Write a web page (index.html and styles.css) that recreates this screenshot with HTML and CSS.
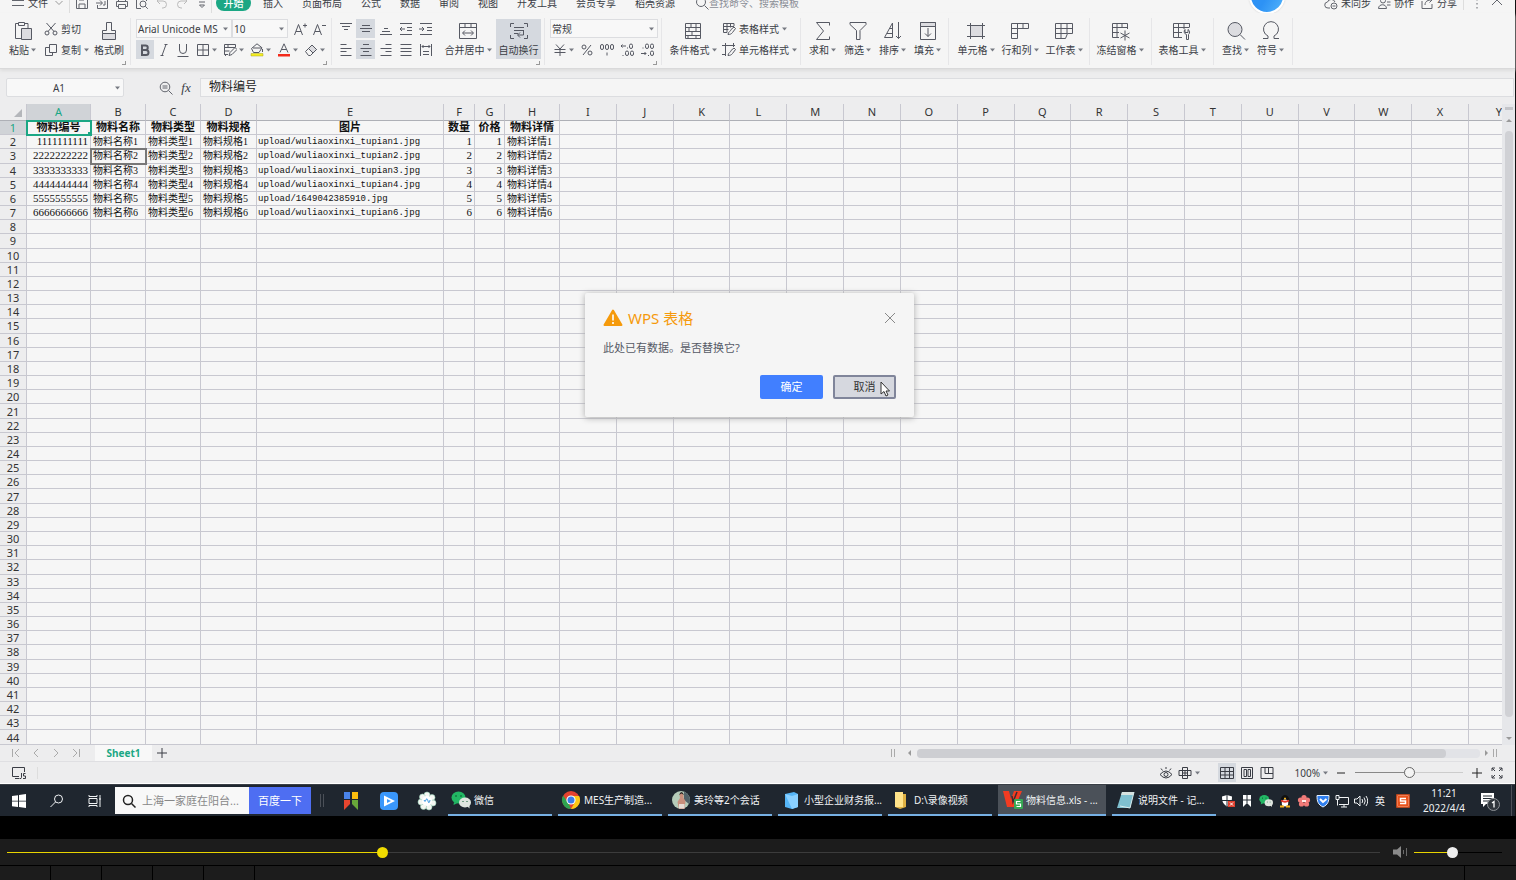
FILE: index.html
```html
<!DOCTYPE html>
<html lang="zh-CN">
<head>
<meta charset="utf-8">
<title>物料信息.xls</title>
<link rel="stylesheet" href="styles.css">
</head>
<body>
<svg class="sprite" aria-hidden="true">
  <symbol id="caret" viewBox="0 0 5 4"><path d="M0 .5h5L2.500 3.500z" fill="currentColor" stroke="none"/></symbol>
  <symbol id="down" viewBox="0 0 8 6"><path d="M.5 1 4 4.500 7.500 1"/></symbol>
  <symbol id="menu" viewBox="0 0 14 14"><path d="M1 4.500h12M1 9.500h12"/></symbol>
  <symbol id="save" viewBox="0 0 14 14"><path d="M1.500 1.500h9l2 2v9h-11zM4 12V8h6v4M4 2v2h5V2"/></symbol>
  <symbol id="export" viewBox="0 0 14 14"><path d="M5 1.500h7.500v11h-10V9M1 7h6M5 4.500 7.500 7 5 9.500M10 5v4h-2"/></symbol>
  <symbol id="print" viewBox="0 0 14 14"><path d="M3.500 5V1.500h7V5M3 10.500H1.500v-5h11v5H11M3.500 8.500h7v4h-7z"/></symbol>
  <symbol id="preview" viewBox="0 0 14 14"><path d="M6 12.500H1.500v-11h10V5"/><circle cx="8" cy="8" r="3"/><path d="m10.300 10.300 2.500 2.500"/></symbol>
  <symbol id="undo" viewBox="0 0 14 14"><path d="M5 2 2 5l3 3M2 5h6a3.500 3.500 0 0 1 0 7H7"/></symbol>
  <symbol id="redo" viewBox="0 0 14 14"><path d="m9 2 3 3-3 3M12 5H6a3.500 3.500 0 0 0 0 7h1"/></symbol>
  <symbol id="more" viewBox="0 0 14 14"><path d="M4 6h6M4.500 9 7 11.500 9.500 9z"/></symbol>
  <symbol id="search" viewBox="0 0 14 14"><circle cx="6" cy="6" r="4.500"/><path d="m9.500 9.500 4 4"/></symbol>
  <symbol id="cloud" viewBox="0 0 14 14"><path d="M6 12H4a3 3 0 0 1-.5-6 4 4 0 0 1 7.500 0"/><circle cx="10" cy="10" r="3"/><path d="M8.500 10h3"/></symbol>
  <symbol id="people" viewBox="0 0 14 14"><circle cx="6" cy="4.500" r="2.500"/><path d="M1.500 12.500c0-5 8-5 8 0zM10 6h3.500M10 9h3.500"/></symbol>
  <symbol id="share" viewBox="0 0 14 14"><path d="M2 5v7.500h10V8M5 9c0-4 3-5 7-5M9.500 1.500 12 4 9.500 6.500"/></symbol>
  <symbol id="dots" viewBox="0 0 14 14"><path d="M7 3v1.500M7 7v1.500M7 11v1.500"/></symbol>
  <symbol id="up" viewBox="0 0 14 14"><path d="m2 9 5-5 5 5"/></symbol>

  <symbol id="paste" viewBox="0 0 20 20"><path d="M9 17.500H2.500v-15h3M12 2.500h3V7M5.500 1.500h6v3h-6z"/><path d="M8.500 7.500h10v11h-10z" fill="#dcdce0"/></symbol>
  <symbol id="cut" viewBox="0 0 14 14"><circle cx="3" cy="11" r="2"/><circle cx="11" cy="11" r="2"/><path d="M2.500 1 10 9.500M11.500 1 4 9.500"/></symbol>
  <symbol id="copy" viewBox="0 0 14 14"><path d="M5.500 1.500h7v8h-7zM5.500 4.500h-4v8h7v-3"/></symbol>
  <symbol id="brush" viewBox="0 0 20 20"><path d="M3.500 12.500h13v6h-13z" fill="#dcdce0"/><path d="M3.500 12.500v-3h4v-8h5v8h4v3"/></symbol>
  <symbol id="grow" viewBox="0 0 14 14"><path d="M1.500 13 5.500 2.500 9.500 13M3 9.500h5M10 3.500h4M12 1.500v4"/></symbol>
  <symbol id="shrink" viewBox="0 0 14 14"><path d="M1.500 13 5.500 2.500 9.500 13M3 9.500h5M10 3.500h4"/></symbol>
  <symbol id="bold" viewBox="0 0 14 14"><path d="M4 2.500h3.500a2.200 2.200 0 0 1 0 4.500H4zM4 7h4a2.400 2.400 0 0 1 0 5H4z" stroke-width="2"/></symbol>
  <symbol id="italic" viewBox="0 0 14 14"><path d="m9 1.500-4 11M7.500 1.500h3M3.500 12.500h3"/></symbol>
  <symbol id="under" viewBox="0 0 14 14"><path d="M3.500 1v6a3.500 3.500 0 0 0 7 0V1M1.500 13.500h11"/></symbol>
  <symbol id="borders" viewBox="0 0 14 14"><path d="M1.500 1.500h11v11h-11zM7 1.500v11M1.500 7h11"/></symbol>
  <symbol id="cellpen" viewBox="0 0 14 14"><path d="M12.500 4V1.500h-11v10H5M1.500 4.500h11M1.500 8h5M5 1.500v3M6 12.500l1-3 5-5 2 2-5 5zM3 13 1.500 11.500"/></symbol>
  <symbol id="fill" viewBox="0 0 14 14"><path d="m7 .8 5 4-3 4.700H3.500L1.500 5.500zM3 5h8M12.500 6v3"/><path d="M1 10.500h12v2.500H1z" fill="#f5ee20" stroke="#a8a520" stroke-width=".5"/></symbol>
  <symbol id="color" viewBox="0 0 14 14"><path d="M3 9.500 7 .8l4 8.700M4.300 6.500h5.400"/><path d="M1 11h12v2.500H1z" fill="#f32a1b" stroke="none"/></symbol>
  <symbol id="erase" viewBox="0 0 14 14"><path d="M1.500 8.500 8 2l4.500 4.500-6 6h-2z"/><path d="M4.500 5.500 8 2l4.500 4.500L9 10z" fill="#dcdce0"/></symbol>

  <symbol id="vtop" viewBox="0 0 14 14"><path d="M1 1.500h12M3 4.500h8M5 7.500h4"/></symbol>
  <symbol id="vmid" viewBox="0 0 14 14"><path d="M3 3.500h8M1 6.500h12M3 9.500h8"/></symbol>
  <symbol id="vbot" viewBox="0 0 14 14"><path d="M5 6.500h4M3 9.500h8M1 12.500h12"/></symbol>
  <symbol id="outdent" viewBox="0 0 14 14"><path d="M1 1.500h12M8 5.500h5M8 8.500h5M1 12.500h12M6 7H1M3 5 1 7l2 2"/></symbol>
  <symbol id="indent" viewBox="0 0 14 14"><path d="M1 1.500h12M8 5.500h5M8 8.500h5M1 12.500h12M0 7h5M3 5l2 2-2 2"/></symbol>
  <symbol id="left" viewBox="0 0 14 14"><path d="M1.500 1.500h6M1.500 5.500h11M1.500 8.500h6M1.500 12.500h11"/></symbol>
  <symbol id="center" viewBox="0 0 14 14"><path d="M4 1.500h6M1.500 5.500h11M4 8.500h6M1.500 12.500h11"/></symbol>
  <symbol id="right" viewBox="0 0 14 14"><path d="M6.500 1.500h6M1.500 5.500h11M6.500 8.500h6M1.500 12.500h11"/></symbol>
  <symbol id="justify" viewBox="0 0 14 14"><path d="M1.500 1.500h11M1.500 5.500h11M1.500 8.500h11M1.500 12.500h11"/></symbol>
  <symbol id="spread" viewBox="0 0 14 14"><path d="M1.500 1v12M12.500 1v12M3 3.500h8M4.500 2 3 3.500 4.500 5M9.500 2 11 3.500 9.500 5M4 8.500h6M4 11.500h6"/></symbol>
  <symbol id="merge" viewBox="0 0 20 20"><path d="M1.500 2.500h17v15h-17zM1.500 6.500h17M7 2.500v4M13 2.500v4M5 12h10M7 9.500 4.500 12 7 14.500M13 9.500l2.500 2.500-2.500 2.500"/></symbol>
  <symbol id="wrap" viewBox="0 0 20 20"><path d="M5 2.500H1.500V6M15 2.500h3.500V6M5 17.500H1.500V14M15 17.500h3.500V14M5 6.500h10M5 9.500h10M5 12.500h4M14.500 9.500v4.500H9M11 11.500 8.500 14l2.500 2.500"/></symbol>
  <symbol id="yen" viewBox="0 0 14 14"><path d="M3 1.500 7 6l4-4.500M7 6v7M1.500 6.500h11M1.500 9.500h11"/></symbol>
  <symbol id="pct" viewBox="0 0 14 14"><circle cx="4" cy="4" r="2"/><circle cx="10" cy="10" r="2"/><path d="M11 2 3 12"/></symbol>
  <symbol id="thou" viewBox="0 0 14 14"><rect x=".5" y="1.500" width="3" height="5" rx="1.500"/><rect x="5.500" y="1.500" width="3" height="5" rx="1.500"/><rect x="10.500" y="1.500" width="3" height="5" rx="1.500"/><path d="M7 9.500v3"/></symbol>
  <symbol id="dinc" viewBox="0 0 14 14"><rect x="9.500" y="1" width="3" height="4.500" rx="1.500"/><rect x="5.500" y="8" width="3" height="4.500" rx="1.500"/><rect x="10.500" y="8" width="3" height="4.500" rx="1.500"/><path d="M6 3H1M2.500 1.500 1 3l1.500 1.500M7 5h1M2.500 12.500h1"/></symbol>
  <symbol id="ddec" viewBox="0 0 14 14"><rect x="5.500" y="1" width="3" height="4.500" rx="1.500"/><rect x="10.500" y="1" width="3" height="4.500" rx="1.500"/><rect x="10.500" y="8" width="3" height="4.500" rx="1.500"/><path d="M1 10.500h5M4.500 9 6 10.500 4.500 12M2.500 5h1M8 12.500h1"/></symbol>

  <symbol id="cond" viewBox="0 0 20 20"><path d="M2.500 2.500h15v15h-15zM2.500 6.500h15M2.500 10.500h15M2.500 14.500h15M8 2.500v4M13 2.500v8M6 6.500v4M9 10.500v4M13 14.500v3M5 14.500v3"/></symbol>
  <symbol id="tstyle" viewBox="0 0 14 14"><path d="M12 4V1.500H1.500v9H5M1.500 4.500H12M1.500 7.500h5M5 1.500v9M8.500 1.500v4M6 12.500c0-3 3-3 3-5l3-2.500 1.500 1.500-3 4c-1 1.500-2.500 2-4.500 2z"/></symbol>
  <symbol id="cstyle" viewBox="0 0 14 14"><path d="M3.500 0v13M0 2.500h13M11.500 0v4M0 11.500h4M6 12.500c0-3 3-3 3-5l3-2.500 1.500 1.500-3 4c-1 1.500-2.500 2-4.500 2z"/></symbol>
  <symbol id="sum" viewBox="0 0 20 20"><path d="M16.500 4.500v-3h-13l7 8.500-7 8.500h13v-3"/></symbol>
  <symbol id="filter" viewBox="0 0 20 20"><path d="M2 1.500h16v2l-6 6v9H8.500v-9L2 3.500z"/></symbol>
  <symbol id="sort" viewBox="0 0 20 20"><path d="M1.500 16.500 9.500 2v14.500zM4 12.500h5.500M7 7.500h2.500M15.500 1v16.500M13 15l2.500 2.500L18 15"/></symbol>
  <symbol id="fillin" viewBox="0 0 20 20"><path d="M2.500 1.500h15v17h-15z"/><path d="M2.500 1.500h15v4h-15z" fill="#dcdce0"/><path d="M10 7v8.500M7 12.500l3 3 3-3"/></symbol>
  <symbol id="cell" viewBox="0 0 20 20"><path d="M4.500 4.500h12v11h-12z" fill="#dcdce0"/><path d="M4.500 2v16M16.500 2v16M1 4.500h18M1 15.500h18"/></symbol>
  <symbol id="rowcol" viewBox="0 0 20 20"><path d="M1.500 2.500h17v5h-11v10h-6zM1.500 7.500h6M7.500 2.500v5M13 2.500v5M1.500 12.500h6"/></symbol>
  <symbol id="sheet" viewBox="0 0 20 20"><path d="M1.500 2.500h17v10h-5l-2 5h-10zM1.500 7.500h17M1.500 12.500h12M7 2.500v15M13 2.500v10"/></symbol>
  <symbol id="freeze" viewBox="0 0 20 20"><path d="M17.500 8V2.500h-15v14H9M2.500 6.500h15M2.500 11.500H9M7 2.500v14M12 2.500v4M15 9.500v10M10.500 12l9 5M19.500 12l-9 5"/></symbol>
  <symbol id="tools" viewBox="0 0 20 20"><path d="M17.500 6V2.500h-16v14H10M1.500 6.500h16M1.500 11.500H10M6.500 2.500v14M12 2.500V8M14.500 18.500v-5a3 3 0 0 1-1.500-5v3h3v-3a3 3 0 0 1 .5 5v5z"/></symbol>
  <symbol id="find" viewBox="0 0 20 20"><circle cx="9" cy="8.500" r="7" fill="#dcdce0"/><path d="m14 13.500 5 5"/></symbol>
  <symbol id="omega" viewBox="0 0 20 20"><path d="M2 17.500h5V15a7.500 7.500 0 1 1 6 0v2.500h5"/></symbol>

  <symbol id="zoomfx" viewBox="0 0 14 14"><circle cx="6" cy="6" r="4.800"/><path d="m9.500 9.500 4 4M3.500 5h5M3.500 7h5"/></symbol>
  <symbol id="first" viewBox="0 0 10 10"><path d="M1.500 1v8M8 1 4 5l4 4"/></symbol>
  <symbol id="prev" viewBox="0 0 10 10"><path d="M7 1 3 5l4 4"/></symbol>
  <symbol id="next" viewBox="0 0 10 10"><path d="m3 1 4 4-4 4"/></symbol>
  <symbol id="last" viewBox="0 0 10 10"><path d="M8.500 1v8M2 1l4 4-4 4"/></symbol>
  <symbol id="plus" viewBox="0 0 10 10"><path d="M5 0v10M0 5h10"/></symbol>
  <symbol id="minus" viewBox="0 0 10 10"><path d="M1 5h8"/></symbol>
  <symbol id="macro" viewBox="0 0 14 14"><path d="M7 10.500H.5v-9h12V6M3 12.500h4M9.500 7v4.500q0 1.500-2 1M13.500 7.500h-2v2.500h2v2.500h-2.500"/></symbol>
  <symbol id="eye" viewBox="0 0 14 14"><path d="M1 8.500q6-7 12 0-6 7-12 0zM2 2.500l1.500 2M7 1v2M12 2.500l-1.500 2"/><circle cx="7" cy="8.500" r="2"/></symbol>
  <symbol id="cross" viewBox="0 0 14 14"><path d="M4.500 1.500h5v11h-5zM1 4.500h12v5H1zM4.500 7h5M7 4.500v5"/></symbol>
  <symbol id="vgrid" viewBox="0 0 14 14"><path d="M.5 1.500h13v11H.5zM.5 5.500h13M.5 9h13M5 1.500v11M9.500 1.500v11"/></symbol>
  <symbol id="vpage" viewBox="0 0 14 14"><path d="M1.500 1.500h11v11h-11zM4 3.500h2.500v7H4zM8 3.500h2.500v7H8z"/></symbol>
  <symbol id="vread" viewBox="0 0 14 14"><path d="M1 1.500h12v11H1zM5 1.500v6h8M8.500 1.500v6"/></symbol>
  <symbol id="expand" viewBox="0 0 14 14"><path d="M2 5V2h3M2 2l3 3M9 2h3v3M12 2 9 5M2 9v3h3M2 12l3-3M12 9v3H9M12 12 9 9"/></symbol>

  <symbol id="win" viewBox="0 0 14 14"><path d="M0 2l6-.8v5.500H0zM7 1l7-1v6.700H7zM0 7.500h6V13l-6-.8zM7 7.500h7V14l-7-1z" fill="#fff" stroke="none"/></symbol>
  <symbol id="lens" viewBox="0 0 14 14"><circle cx="8.500" cy="5" r="4"/><path d="m5.500 8-5 5"/></symbol>
  <symbol id="task" viewBox="0 0 14 14"><path d="M1 1v1.500h8V1M1 13v-1.500h8V13M1 4.500h8v5H1zM12 1v12M11 5h2"/></symbol>
  <symbol id="flag" viewBox="0 0 20 20"><path d="M3 1h6v7H3z" fill="#4a83e8" stroke="none"/><path d="M11 1h6v7h-6z" fill="#fbbd0e" stroke="none"/><path d="M3 9h6v4l-6 6z" fill="#e8452f" stroke="none"/><path d="M11 9h6v10l-6-6z" fill="#68a83a" stroke="none"/></symbol>
  <symbol id="play" viewBox="0 0 20 20"><rect x="1" y="1" width="18" height="18" rx="4" fill="#3a97fb" stroke="none"/><path d="M5 4.500 16 10 5 15.500z" fill="#fff" stroke="none"/><path d="m8 8 4 2-4 2z" fill="#3a97fb" stroke="none"/></symbol>
  <symbol id="flower" viewBox="0 0 20 20"><g fill="#f4f7f2" stroke="#9bd0b8" stroke-width=".6"><circle cx="10" cy="4" r="3"/><circle cx="15" cy="6.500" r="3"/><circle cx="16" cy="12" r="3"/><circle cx="12" cy="16" r="3"/><circle cx="6.500" cy="15.500" r="3"/><circle cx="4" cy="11" r="3"/><circle cx="5.500" cy="6" r="3"/></g><circle cx="10" cy="10" r="5" fill="#fff" stroke="none"/><path d="M7 9q1 3 2 0t2 1 2-1" stroke="#3e9ae0"/></symbol>
  <symbol id="wechat" viewBox="0 0 20 20"><ellipse cx="7.500" cy="7.500" rx="7" ry="6" fill="#22b764" stroke="none"/><path d="m3 12-.5 3 4-2z" fill="#22b764" stroke="none"/><ellipse cx="14" cy="12.500" rx="6" ry="5" fill="#dfe5df" stroke="none"/><path d="m16 16 2.500 2.500V15z" fill="#dfe5df" stroke="none"/><path d="M5 5v2M10 5v2M12 11v1M16 11v1" stroke="#0b5c31"/></symbol>
  <symbol id="chrome" viewBox="0 0 20 20"><circle cx="10" cy="10" r="9" fill="#e5432f" stroke="none"/><path d="M2.200 5.500 8 14l2 5A9 9 0 0 1 2.200 5.500z" fill="#2ea350" stroke="none"/><path d="M10 6h8.100A9 9 0 0 1 10 19l4-7z" fill="#fbc916" stroke="none"/><circle cx="10" cy="10" r="4.600" fill="#fff" stroke="none"/><circle cx="10" cy="10" r="3.500" fill="#3c7ee8" stroke="none"/></symbol>
  <symbol id="avatar" viewBox="0 0 20 20"><circle cx="10" cy="10" r="9" fill="#b5cbb8" stroke="none"/><path d="M13 1.500a9 9 0 0 1 5 12.500l-5-4z" fill="#52636a" stroke="none"/><path d="M8.500 5q2-4 4 0v3l2 3-1 8H8l-1.500-7L9 8z" fill="#c98f7c" stroke="none"/><path d="M8 5q2.500-6 5 0l-2.500-1.500z" fill="#2c2422" stroke="none"/><path d="M8 14h5.500v4.500H8z" fill="#e7ddd6" stroke="none"/></symbol>
  <symbol id="cube" viewBox="0 0 20 20"><path d="M4 4l9-2 4 2v13l-6 2-7-2z" fill="#55b5f7" stroke="none"/><path d="M4 4l7 2 6-2v13l-6 2z" fill="#8ad0ff" stroke="none"/></symbol>
  <symbol id="folder" viewBox="0 0 20 20"><path d="M4 2h8v15H4z" fill="#ffe38a" stroke="none"/><path d="M12 4h3v13l-6 2-5-2h8z" fill="#dfb143" stroke="none"/></symbol>
  <symbol id="wps" viewBox="0 0 20 20"><path d="M0 1h6l2 8 3-8h8l-7 16H4z" fill="#f33b21" stroke="none"/><path d="m9 6 1 6 4-10" stroke="#3b2c30" stroke-width="1.500"/><rect x="11" y="9" width="9" height="10" rx="1" fill="#35a853" stroke="none"/><path d="M17.500 11.500h-4V14h4v2.500h-4" stroke="#fff" stroke-width="1.200"/></symbol>
  <symbol id="note" viewBox="0 0 20 20"><path d="M7 2h12l-4 16H2z" fill="#7fc0d0" stroke="none"/><path d="M7 2h12l-1 3H6z" fill="#d6e2e0" stroke="none"/><path d="m5 16 10 2 4-16" stroke="#d9ecef"/></symbol>
  <symbol id="shield" viewBox="0 0 14 14"><path d="M6 1 11 2.500c0 5-1 7.500-5 10-4-2.500-5-5-5-10z" fill="#fff" stroke="none"/><path d="M6 1v11M1 6.500h10" stroke="#222b33"/><rect x="7" y="7" width="7" height="6" fill="#e0402f" stroke="none"/><path d="m9 8.500 3 3M12 8.500l-3 3" stroke="#fff"/></symbol>
  <symbol id="ribbonw" viewBox="0 0 14 14"><path d="M3 1h8v12l-4-4-4 4z" fill="#fff" stroke="none"/><path d="M7 1v8M3 6h8" stroke="#222b33"/></symbol>
  <symbol id="qq" viewBox="0 0 14 14"><ellipse cx="7" cy="7" rx="4.500" ry="6" fill="#101010" stroke="none"/><ellipse cx="7" cy="9" rx="3.300" ry="3.500" fill="#fff" stroke="none"/><path d="M3 6.500q4 2.500 8 0" stroke="#e8392b" stroke-width="2"/><path d="M6 4.500h2" stroke="#f7b31a" stroke-width="1.500"/><path d="M2 12.500h4M8 12.500h4" stroke="#f7b31a" stroke-width="2"/></symbol>
  <symbol id="rose" viewBox="0 0 14 14"><g fill="#f07a78" stroke="none"><circle cx="7" cy="3.500" r="2.600"/><circle cx="10.500" cy="6" r="2.600"/><circle cx="9.500" cy="10" r="2.600"/><circle cx="4.500" cy="10" r="2.600"/><circle cx="3.500" cy="6" r="2.600"/></g><path d="M5 7h4" stroke="#ffe9e6" stroke-width="2"/></symbol>
  <symbol id="guard" viewBox="0 0 14 14"><path d="M1 1.500h12c0 6-1 9-6 11.500C2 10.500 1 7.500 1 1.500z" fill="#2f7ff0" stroke="#e8f0fa"/><path d="m4 5 3 3 3.500-3" stroke="#fff" stroke-width="2"/></symbol>
  <symbol id="net" viewBox="0 0 14 14"><path d="M4 3.500h9.500v7H4M6 13h6M9 10.500V13M1 1.500h3v4H1zM2.500 5.500v6"/></symbol>
  <symbol id="sound" viewBox="0 0 14 14"><path d="M.5 5H3l3-3v10L3 9H.5zM8 5q1.500 2 0 4M10 3.500q2.500 3.500 0 7M12 2q3.500 5 0 10"/></symbol>
  <symbol id="sogou" viewBox="0 0 14 14"><rect x="1" y="1" width="12" height="12" fill="#fff" stroke="#e9521b" stroke-width="1.500"/><rect x="2" y="2" width="10" height="10" fill="#e9521b" stroke="none"/><path d="M10 4.500H4.500v2.500h5v2.500H4" stroke="#fff" stroke-width="1.500"/></symbol>
  <symbol id="notice" viewBox="0 0 20 20"><path d="M1 2h13v11H6l-3 3v-3H1z" fill="#fff" stroke="none"/><path d="M3 5h9M3 7.500h9M3 10h9" stroke="#222b33"/><circle cx="13.500" cy="13.500" r="6" fill="#30363c" stroke="#8d9196"/><path d="m12 12 2-1.500v6" stroke="#fff" stroke-width="1.300"/></symbol>
  <symbol id="speaker" viewBox="0 0 16 14"><path d="M1 4.500h4L9 1v12L5 9.500H1z" fill="#8a8a8a" stroke="none"/><path d="M11.500 5v4M14.500 3v8" stroke="#6a6a6a"/></symbol>
  <symbol id="warn" viewBox="0 0 20 18"><path d="M10 1.500 18.500 16h-17z" fill="#f59a0c" stroke="#f59a0c" stroke-width="2" stroke-linejoin="round"/><path d="M10 5.500v6M10 13v2" stroke="#fff" stroke-width="1.600"/></symbol>
  <symbol id="close" viewBox="0 0 12 12"><path d="m1 1 10 10M11 1 1 11"/></symbol>
  <symbol id="pointer" viewBox="0 0 10 16"><path d="M1 1v12l3-2.500 2 4.500 2-1-2-4h3.500z" fill="#fff" stroke="#333"/></symbol>
</svg>

<main class="frame">
  <header class="menubar">
    <button class="file"><svg class="s14"><use href="#menu"/></svg>文件<svg class="s8"><use href="#down"/></svg></button>
    <div class="quick">
      <button aria-label="保存"><svg class="s14"><use href="#save"/></svg></button>
      <button aria-label="输出"><svg class="s14"><use href="#export"/></svg></button>
      <button aria-label="打印"><svg class="s14"><use href="#print"/></svg></button>
      <button aria-label="预览"><svg class="s14"><use href="#preview"/></svg></button>
      <button class="dim" aria-label="撤销"><svg class="s14"><use href="#undo"/></svg></button>
      <button class="dim" aria-label="恢复"><svg class="s14"><use href="#redo"/></svg></button>
      <button aria-label="更多"><svg class="s14"><use href="#more"/></svg></button>
    </div>
    <nav class="tabs">
      <button class="current">开始</button><button>插入</button><button>页面布局</button><button>公式</button><button>数据</button><button>审阅</button><button>视图</button><button>开发工具</button><button>会员专享</button><button>稻壳资源</button>
    </nav>
    <label class="command"><svg class="s14"><use href="#search"/></svg><input type="text" placeholder="查找命令、搜索模板" aria-label="查找命令"></label>
    <div class="account">
      <button><svg class="s14"><use href="#cloud"/></svg>未同步</button>
      <button><svg class="s14"><use href="#people"/></svg>协作</button>
      <button><svg class="s14"><use href="#share"/></svg>分享</button>
      <button class="dots" aria-label="选项"><svg class="s14"><use href="#dots"/></svg></button>
      <button aria-label="收起"><svg class="s14"><use href="#up"/></svg></button>
    </div>
    <span class="orb"></span>
  </header>

  <section class="ribbon">
    <div class="group g-clip">
      <button class="big w33"><svg class="s20"><use href="#paste"/></svg><span>粘贴<svg class="caret"><use href="#caret"/></svg></span></button>
      <div class="stack clip">
        <button class="text"><svg class="s14"><use href="#cut"/></svg>剪切</button>
        <button class="text"><svg class="s14"><use href="#copy"/></svg>复制<svg class="caret"><use href="#caret"/></svg></button>
      </div>
      <button class="big w36"><svg class="s20"><use href="#brush"/></svg><span>格式刷</span></button>
      <i class="corner"></i>
    </div>
    <div class="group g-font">
      <div class="stack">
        <div class="line">
          <span class="pick face"><select aria-label="字体"><option>Arial Unicode MS</option></select><svg class="caret"><use href="#caret"/></svg></span>
          <span class="pick size"><select aria-label="字号"><option>10</option></select><svg class="caret"><use href="#caret"/></svg></span>
          <button class="tool step" aria-label="增大字号"><svg class="s14"><use href="#grow"/></svg></button>
          <button class="tool" aria-label="减小字号"><svg class="s14"><use href="#shrink"/></svg></button>
        </div>
        <div class="line">
          <button class="tool on" aria-label="加粗"><svg class="s14"><use href="#bold"/></svg></button>
          <button class="tool" aria-label="倾斜"><svg class="s14"><use href="#italic"/></svg></button>
          <button class="tool" aria-label="下划线"><svg class="s14"><use href="#under"/></svg></button>
          <button class="tool drop" aria-label="边框"><svg class="s14"><use href="#borders"/></svg><svg class="caret"><use href="#caret"/></svg></button>
          <button class="tool drop" aria-label="绘图边框"><svg class="s14"><use href="#cellpen"/></svg><svg class="caret"><use href="#caret"/></svg></button>
          <button class="tool drop" aria-label="填充颜色"><svg class="s14"><use href="#fill"/></svg><svg class="caret"><use href="#caret"/></svg></button>
          <button class="tool drop" aria-label="字体颜色"><svg class="s14"><use href="#color"/></svg><svg class="caret"><use href="#caret"/></svg></button>
          <button class="tool drop" aria-label="清除"><svg class="s14"><use href="#erase"/></svg><svg class="caret"><use href="#caret"/></svg></button>
        </div>
      </div>
      <i class="corner"></i>
    </div>
    <div class="group g-align">
      <div class="stack aligns">
        <div class="line tight">
          <button class="tool" aria-label="顶端对齐"><svg class="s14"><use href="#vtop"/></svg></button>
          <button class="tool on" aria-label="垂直居中"><svg class="s14"><use href="#vmid"/></svg></button>
          <button class="tool" aria-label="底端对齐"><svg class="s14"><use href="#vbot"/></svg></button>
          <button class="tool" aria-label="减少缩进"><svg class="s14"><use href="#outdent"/></svg></button>
          <button class="tool" aria-label="增加缩进"><svg class="s14"><use href="#indent"/></svg></button>
        </div>
        <div class="line tight">
          <button class="tool" aria-label="左对齐"><svg class="s14"><use href="#left"/></svg></button>
          <button class="tool on" aria-label="居中"><svg class="s14"><use href="#center"/></svg></button>
          <button class="tool" aria-label="右对齐"><svg class="s14"><use href="#right"/></svg></button>
          <button class="tool" aria-label="两端对齐"><svg class="s14"><use href="#justify"/></svg></button>
          <button class="tool" aria-label="分散对齐"><svg class="s14"><use href="#spread"/></svg></button>
        </div>
      </div>
      <button class="big w50"><svg class="s20"><use href="#merge"/></svg><span>合并居中<svg class="caret"><use href="#caret"/></svg></span></button>
      <button class="big w45 on"><svg class="s20"><use href="#wrap"/></svg><span>自动换行</span></button>
      <i class="corner"></i>
    </div>
    <div class="group g-num">
      <div class="stack">
        <span class="pick format"><select aria-label="数字格式"><option>常规</option></select><svg class="caret"><use href="#caret"/></svg></span>
        <div class="line tight numbers">
          <button class="tool drop" aria-label="货币"><svg class="s14"><use href="#yen"/></svg><svg class="caret"><use href="#caret"/></svg></button>
          <button class="tool" aria-label="百分比"><svg class="s14"><use href="#pct"/></svg></button>
          <button class="tool" aria-label="千位分隔"><svg class="s14"><use href="#thou"/></svg></button>
          <button class="tool" aria-label="增加小数"><svg class="s14"><use href="#dinc"/></svg></button>
          <button class="tool" aria-label="减少小数"><svg class="s14"><use href="#ddec"/></svg></button>
        </div>
      </div>
      <i class="corner"></i>
    </div>
    <div class="group g-style">
      <button class="big w50"><svg class="s20"><use href="#cond"/></svg><span>条件格式<svg class="caret"><use href="#caret"/></svg></span></button>
      <div class="stack">
        <button class="text"><svg class="s14"><use href="#tstyle"/></svg>表格样式<svg class="caret"><use href="#caret"/></svg></button>
        <button class="text"><svg class="s14"><use href="#cstyle"/></svg>单元格样式<svg class="caret"><use href="#caret"/></svg></button>
      </div>
    </div>
    <div class="group g-edit">
      <button class="big w35"><svg class="s20"><use href="#sum"/></svg><span>求和<svg class="caret"><use href="#caret"/></svg></span></button>
      <button class="big w35"><svg class="s20"><use href="#filter"/></svg><span>筛选<svg class="caret"><use href="#caret"/></svg></span></button>
      <button class="big w35"><svg class="s20"><use href="#sort"/></svg><span>排序<svg class="caret"><use href="#caret"/></svg></span></button>
      <button class="big w35"><svg class="s20"><use href="#fillin"/></svg><span>填充<svg class="caret"><use href="#caret"/></svg></span></button>
    </div>
    <div class="group g-cell">
      <button class="big w44"><svg class="s20"><use href="#cell"/></svg><span>单元格<svg class="caret"><use href="#caret"/></svg></span></button>
      <button class="big w44"><svg class="s20"><use href="#rowcol"/></svg><span>行和列<svg class="caret"><use href="#caret"/></svg></span></button>
      <button class="big w44"><svg class="s20"><use href="#sheet"/></svg><span>工作表<svg class="caret"><use href="#caret"/></svg></span></button>
    </div>
    <div class="group g-one"><button class="big w50"><svg class="s20"><use href="#freeze"/></svg><span>冻结窗格<svg class="caret"><use href="#caret"/></svg></span></button></div>
    <div class="group g-one"><button class="big w50"><svg class="s20"><use href="#tools"/></svg><span>表格工具<svg class="caret"><use href="#caret"/></svg></span></button></div>
    <div class="group g-find">
      <button class="big w35"><svg class="s20"><use href="#find"/></svg><span>查找<svg class="caret"><use href="#caret"/></svg></span></button>
      <button class="big w35"><svg class="s20"><use href="#omega"/></svg><span>符号<svg class="caret"><use href="#caret"/></svg></span></button>
    </div>
  </section>

  <section class="formula">
    <span class="pick name"><input type="text" value="A1" aria-label="名称框"><svg class="caret"><use href="#caret"/></svg></span>
    <button class="fxzoom" aria-label="查看公式"><svg class="s14"><use href="#zoomfx"/></svg></button>
    <button class="fx">fx</button>
    <input class="content" type="text" value="物料编号" aria-label="编辑栏">
  </section>

  <section class="workarea">
    <div class="sheet"><table id="grid"></table></div>
    <div class="vbar"><i class="split"></i><i class="arrow-up"></i><i class="vthumb"></i><i class="arrow-down"></i></div>
  </section>

  <footer class="sheetbar">
    <div class="pager">
      <button aria-label="第一个"><svg class="s10"><use href="#first"/></svg></button>
      <button aria-label="上一个"><svg class="s10"><use href="#prev"/></svg></button>
      <button aria-label="下一个"><svg class="s10"><use href="#next"/></svg></button>
      <button aria-label="最后一个"><svg class="s10"><use href="#last"/></svg></button>
    </div>
    <button class="sheettab">Sheet1</button>
    <button class="add" aria-label="新建工作表"><svg class="s10"><use href="#plus"/></svg></button>
    <div class="hbar"><i class="grip"></i><i class="arrow-left"></i><span class="track"><i class="hthumb"></i></span><i class="arrow-right"></i><i class="grip"></i></div>
  </footer>

  <footer class="status">
    <button class="macro" aria-label="宏"><svg class="s14"><use href="#macro"/></svg></button>
    <div class="views">
      <button aria-label="护眼模式"><svg class="s14"><use href="#eye"/></svg></button>
      <button class="reading" aria-label="阅读模式"><svg class="s14"><use href="#cross"/></svg><svg class="caret"><use href="#caret"/></svg></button>
      <button class="mode on" aria-label="普通视图"><svg class="s14"><use href="#vgrid"/></svg></button>
      <button class="mode" aria-label="页面布局"><svg class="s14"><use href="#vpage"/></svg></button>
      <button class="mode" aria-label="分页预览"><svg class="s14"><use href="#vread"/></svg></button>
      <button class="percent">100%<svg class="caret"><use href="#caret"/></svg></button>
      <button class="sign" aria-label="缩小"><svg class="s10"><use href="#minus"/></svg></button>
      <input class="zoom" type="range" min="0" max="100" value="50" aria-label="显示比例">
      <button class="sign" aria-label="放大"><svg class="s10"><use href="#plus"/></svg></button>
      <button class="full" aria-label="全屏"><svg class="s14"><use href="#expand"/></svg></button>
    </div>
  </footer>

  <section class="taskbar">
    <div class="starts">
      <button aria-label="开始菜单"><svg class="s14"><use href="#win"/></svg></button>
      <button aria-label="搜索"><svg class="s14"><use href="#lens"/></svg></button>
      <button aria-label="任务视图"><svg class="s14"><use href="#task"/></svg></button>
    </div>
    <form class="baidu"><svg class="s14"><use href="#search"/></svg><input type="text" placeholder="上海一家庭在阳台..." aria-label="百度搜索"><button type="button">百度一下</button></form>
    <i class="grip taskgrip"></i>
    <div class="pins">
      <button aria-label="书签"><svg class="s20"><use href="#flag"/></svg></button>
      <button aria-label="播放器"><svg class="s20"><use href="#play"/></svg></button>
      <button aria-label="浏览器"><svg class="s20"><use href="#flower"/></svg></button>
    </div>
    <div class="apps">
      <button><svg class="s20"><use href="#wechat"/></svg>微信</button>
      <button><svg class="s20"><use href="#chrome"/></svg>MES生产制造...</button>
      <button><svg class="s20"><use href="#avatar"/></svg>美玲等2个会话</button>
      <button><svg class="s20"><use href="#cube"/></svg>小型企业财务报...</button>
      <button><svg class="s20"><use href="#folder"/></svg>D:\录像视频</button>
      <button class="active"><svg class="s20"><use href="#wps"/></svg>物料信息.xls - ...</button>
      <button><svg class="s20"><use href="#note"/></svg>说明文件 - 记...</button>
    </div>
    <div class="tray">
      <svg class="s14"><use href="#shield"/></svg><svg class="s14"><use href="#ribbonw"/></svg><svg class="s14"><use href="#wechat"/></svg><svg class="s14"><use href="#qq"/></svg><svg class="s14"><use href="#rose"/></svg><svg class="s14"><use href="#guard"/></svg><svg class="s14"><use href="#net"/></svg><svg class="s14"><use href="#sound"/></svg><span class="ime">英</span><svg class="s14"><use href="#sogou"/></svg>
    </div>
    <time class="clock"><span>11:21</span><span>2022/4/4</span></time>
    <button class="notice" aria-label="通知"><svg class="s20"><use href="#notice"/></svg></button>
  </section>

  <section class="dialog" role="dialog" aria-labelledby="dlg">
    <header><svg class="s20"><use href="#warn"/></svg><h2 id="dlg">WPS 表格</h2><button class="close" aria-label="关闭"><svg class="s12"><use href="#close"/></svg></button></header>
    <p>此处已有数据。是否替换它?</p>
    <div class="actions"><button class="ok">确定</button><button class="cancel">取消</button></div>
    <svg class="pointer"><use href="#pointer"/></svg>
  </section>
</main>

<section class="player">
  <input class="seek" type="range" min="0" max="1000" value="272" aria-label="播放进度">
  <svg class="speaker"><use href="#speaker"/></svg>
  <input class="volume" type="range" min="0" max="1000" value="435" aria-label="音量">
</section>
<section class="controls"><i></i><i></i><i></i><i></i><i></i><i class="tail"></i></section>
<script src="script.js"></script>
</body>
</html>
```
FILE: styles.css
```css
* { box-sizing: border-box; }
body { margin: 0; height: 100vh; display: flex; flex-direction: column; overflow: hidden; background: #000; color: #3a3d45; font: 10px/14px "Noto Sans", "Noto Sans CJK SC", sans-serif; }
button, input, select { margin: 0; padding: 0; border: 0; background: none; color: inherit; font: inherit; outline: 0; }
button { display: flex; align-items: center; justify-content: center; white-space: nowrap; }
input { min-width: 0; }
svg { flex: none; fill: none; stroke: currentColor; stroke-width: 1; display: block; }
.sprite { position: absolute; width: 0; height: 0; }
.s8 { width: 8px; height: 6px; }
.s10 { width: 10px; height: 10px; }
.s12 { width: 12px; height: 12px; }
.s14 { width: 14px; height: 14px; }
.s20 { width: 20px; height: 20px; }
.caret { width: 5px; height: 4px; color: #777a82; }

.frame { position: relative; flex: 1; min-height: 0; display: flex; flex-direction: column; margin-bottom: 23px; border-right: 1px solid #111; background: #f5f5f5; }

.menubar { position: relative; height: 13px; display: flex; align-items: flex-end; overflow: hidden; padding-left: 11px; flex: none; }
.menubar > * { flex: none; height: 20px; display: flex; align-items: center; }
.file { gap: 3px; width: 58px; justify-content: flex-start; }
.file svg:last-child { margin-left: 4px; color: #999; }
.quick { border-left: 1px solid #ddd; border-right: 1px solid #ddd; width: 143px; gap: 6px; padding-left: 5px; }
.menubar .s14 { color: #62656d; }
.menubar .dim .s14 { color: #bbb; }
.tabs { gap: 19px; padding-left: 4px; }
.tabs .current { width: 35px; height: 16px; margin-right: -7px; border-radius: 8px; background: #1ba784; color: #fff; font-weight: 500; }
.command { padding-left: 20px; color: #8a8d95; }
.command input { width: 100px; }
.command input::placeholder { color: #8a8d95; }
.account { margin-left: auto; padding-right: 11px; gap: 6px; }
.account button { gap: 3px; }
.account .dots { border-left: 1px solid #ddd; padding-left: 6px; }
.menubar .orb { position: absolute; left: 1249px; top: -22px; width: 36px; height: 36px; border: 2px solid #fff; border-radius: 50%; background: linear-gradient(120deg, #2d92f5 50%, #53b4fb); box-shadow: 0 0 2px #ccc; }

.ribbon { height: 56px; flex: none; display: flex; border-bottom: 1px solid #d9d9da; box-shadow: 0 2px 3px #dedede; position: relative; }
.ribbon .s14, .ribbon .s20 { color: #565963; }
.group { position: relative; flex: none; display: flex; align-items: flex-start; padding: 6px 0 0 5px; }
.group::after { content: ""; position: absolute; right: 0; top: 5px; bottom: 3px; width: 1px; background: #e6e6e8; }
.g-clip { width: 131px; padding-left: 6px; }
.g-font { width: 201px; }
.g-align { width: 213px; padding-left: 4px; }
.g-num { width: 117px; }
.g-style { width: 139px; gap: 4px; padding-left: 6px; }
.g-edit { width: 148px; padding-left: 4px; }
.g-cell { width: 141px; }
.g-one { width: 62px; padding-left: 5px; }
.g-find { width: 79px; padding-left: 4px; }
.big { height: 40px; flex: none; flex-direction: column; justify-content: flex-start; padding-top: 2px; gap: 2px; }
.big span { display: flex; align-items: center; gap: 2px; }
.w33 { width: 33px; }
.w35 { width: 35px; }
.w36 { width: 36px; }
.w44 { width: 44px; }
.w45 { width: 45px; margin-left: 3px; }
.w50 { width: 50px; }
.on { background: #d5d9df; }
.stack { display: flex; flex-direction: column; gap: 2px; align-items: flex-start; }
.clip { width: 47px; margin: 0 0 0 5px; }
.text { height: 19px; gap: 3px; }
.line { display: flex; height: 19px; gap: 1px; align-items: center; }
.tool { width: 18px; height: 19px; gap: 2px; }
.drop { width: 26px; }
.step { margin-left: 2px; }
.aligns { margin: 0 8px 0 0; }
.tight .tool { width: 19px; }
.tight .drop { width: 26px; }
.pick { position: relative; display: flex; height: 19px; border: 1px solid #dcdde0; background: #f8f8f8; }
.pick select, .pick input { appearance: none; width: 100%; padding-left: 1px; }
.pick .caret { position: absolute; right: 3px; top: 7px; }
.face { width: 96px; margin-right: -1px; }
.size { width: 56px; }
.format { width: 108px; }
.corner { position: absolute; right: 5px; bottom: 3px; width: 4px; height: 4px; border: solid #999; border-width: 0 1px 1px 0; }

.formula { height: 35px; flex: none; display: flex; align-items: flex-start; padding: 9px 1px 0 6px; background: #ededee; }
.name { width: 118px; border-radius: 2px; }
.name input { text-align: center; padding: 0 12px 0 0; }
.fxzoom { height: 19px; width: 22px; margin-left: 31px; color: #62656d; }
.fx { height: 19px; width: 18px; margin-right: 5px; font: italic 13px/19px "Liberation Serif", serif; }
.content { flex: 1; height: 19px; padding: 0 8px 3px; border: 1px solid #dcdde0; background: #f5f5f5; font-size: 12px; line-height: 15px; color: #222; }

.workarea { flex: 1; min-height: 0; display: flex; background: #ededee; }
.sheet { flex: 1; min-width: 0; overflow: hidden; }
table { width: 100%; height: 100%; table-layout: fixed; border-collapse: separate; border-spacing: 0; }
th, td { padding: 0 2px; border: solid #c8c8d0; border-width: 0 1px 1px 0; line-height: 11px; white-space: nowrap; overflow: hidden; }
td { background: #f6f6f6; color: #111; font-family: "Liberation Serif", "Noto Sans CJK SC", serif; font-size: 10px; }
th { padding: 0; background: #ededee; color: #333; font-size: 11px; font-weight: 400; text-align: center; }
thead th { height: 17px; padding-bottom: 2px; border-bottom-color: #aeb0b6; }
.c-head { width: 27px; }
.c-a { width: 64px; }
.c-b, .c-c, .c-h { width: 55px; }
.c-d { width: 56px; }
.c-e { width: 187px; }
.c-f { width: 31px; }
.c-g { width: 30px; }
.c-y { width: 33px; }
thead th:last-child { text-align: right; border-right: 0; }
td:last-child { border-right: 0; }
.lit { background: #d0d3d7; color: #1ba784; }
.title { font-size: 11px; font-weight: 700; text-align: center; }
.num { font-size: 11px; text-align: right; }
.path { font-family: "Liberation Mono", monospace; font-size: 9px; line-height: 9px; padding: 2px 1px 0; }
.picked, .marked { position: relative; overflow: visible; outline: 2px solid #1ba784; outline-offset: -1px; }
.marked { outline-color: #777; }
.picked::after { content: ""; position: absolute; right: -2px; bottom: -2px; width: 4px; height: 4px; background: #1ba784; }
.wedge { display: block; width: 0; height: 0; margin: 3px 4px 0 auto; border: solid transparent; border-width: 4px; border-right-color: #b4b6ba; border-bottom-color: #b4b6ba; }
.vbar { width: 13px; display: flex; flex-direction: column; align-items: center; background: #e6e7ea; }
.vbar .split { width: 8px; height: 3px; margin: 3px 0 9px; background: #c4c5c9; }
.arrow-up, .arrow-down, .arrow-left, .arrow-right { width: 0; height: 0; border: 3px solid transparent; }
.arrow-up { border-top-width: 0; border-bottom-color: #999; }
.arrow-down { border-bottom-width: 0; border-top-color: #999; margin: 20px 0 5px; }
.arrow-left { border-left-width: 0; border-right-color: #999; }
.arrow-right { border-right-width: 0; border-left-color: #999; }
.vthumb { flex: 1; width: 8px; margin-top: 9px; border-radius: 4px; background: #d0d1d5; }

.sheetbar { height: 17px; flex: none; display: flex; align-items: center; background: #ededee; border-bottom: 1px solid #dfdfe2; }
.pager { display: flex; gap: 10px; padding-left: 11px; color: #aaa; width: 95px; }
.sheettab { width: 57px; height: 16px; background: #f8f8f8; color: #1ba784; font-weight: 700; }
.add { width: 20px; }
.hbar { margin-left: auto; width: 624px; padding-right: 10px; display: flex; align-items: center; justify-content: space-between; }
.track { width: 563px; height: 9px; border-radius: 4px; background: #e2e3e7; display: flex; }
.hthumb { width: 94%; border-radius: 4px; background: #cdced2; }
.grip { width: 4px; height: 8px; border: solid #aaa; border-width: 0 1px; margin-right: 8px; }

.status { height: 22px; flex: none; display: flex; align-items: center; background: #ededee; border-bottom: 1px solid #fff; }
.macro { margin-left: 12px; width: 26px; height: 12px; justify-content: flex-start; border-right: 1px solid #ddd; }
.views { margin-left: auto; display: flex; align-items: center; padding-right: 11px; }
.reading { gap: 3px; margin: 0 18px 0 5px; }
.mode { width: 18px; height: 19px; margin-right: 2px; }
.percent { gap: 3px; margin: 0 6px 0 17px; font-size: 10px; }
.sign { width: 14px; color: #222; stroke-width: 2; }
.zoom { width: 108px; margin: 0 7px; }
.full { margin-left: 6px; }

input[type="range"] { appearance: none; height: 12px; }
input[type="range"]::-webkit-slider-runnable-track { height: 1px; }
input[type="range"]::-webkit-slider-thumb { appearance: none; width: 11px; height: 11px; margin-top: -5px; border-radius: 50%; }
.zoom::-webkit-slider-runnable-track { background: linear-gradient(90deg, #888 50%, #ccc 50%); }
.zoom::-webkit-slider-thumb { background: #f4f4f4; border: 1px solid #666; }

.taskbar { height: 32px; flex: none; display: flex; align-items: center; background: #1f262f; border-top: 1px solid #3a3f46; color: #f0f2f4; }
.starts { display: flex; gap: 24px; padding-left: 12px; width: 115px; }
.baidu { display: flex; align-items: center; width: 196px; height: 27px; background: #f8f8f8; color: #222; font-size: 11px; padding-left: 7px; flex: none; }
.baidu svg { stroke-width: 1.5px; }
.baidu input { flex: 1; padding-left: 6px; }
.baidu input::placeholder { color: #888; }
.baidu button { width: 62px; height: 27px; background: #4e6ef2; color: #fff; }
.taskgrip { height: 13px; margin: 0 0 0 9px; border-color: #4b5058; }
.pins { display: flex; gap: 18px; margin-left: 17px; width: 107px; }
.apps { display: flex; height: 31px; gap: 6px; }
.apps button { width: 104px; justify-content: flex-start; gap: 3px; padding-left: 3px; border-bottom: 2px solid #76b0e4; }
.apps .active { width: 108px; background: #4b5159; padding-left: 5px; }
.tray { display: flex; align-items: center; gap: 5px; margin-left: 5px; }
.tray .s14:last-child { margin-left: 4px; }
.ime { width: 14px; text-align: center; }
.clock { width: 56px; margin-left: auto; text-align: center; display: flex; flex-direction: column; }
.clock span { line-height: 15px; }
.notice { width: 40px; border-right: 1px solid #4b5058; margin-right: 3px; justify-content: flex-start; padding-left: 8px; height: 31px; }

.dialog { position: absolute; left: 585px; top: 293px; width: 329px; height: 124px; padding: 16px 18px 18px; display: flex; flex-direction: column; background: #f5f5f5; border-radius: 2px; box-shadow: 0 1px 6px #aaa; }
.dialog header { display: flex; align-items: center; height: 18px; gap: 5px; color: #f59a0c; }
.dialog h2 { flex: 1; margin: 0; font-size: 15px; line-height: 20px; font-weight: 400; }
.close { color: #888; }
.dialog p { margin: 13px 0 0; font-size: 11px; line-height: 16px; color: #555a66; }
.actions { display: flex; justify-content: flex-end; gap: 10px; margin-top: auto; }
.actions button { width: 63px; height: 24px; border-radius: 2px; font-size: 11px; }
.ok { background: #417fff; color: #fff; }
.actions .cancel { background: #d6d8df; border: 2px solid #80859a; color: #333; }
.pointer { position: absolute; left: 295px; top: 88px; width: 10px; height: 16px; }

.player { height: 26px; flex: none; display: flex; align-items: center; background: #1c1c1c; padding: 0 14px 0 7px; }
.seek { flex: 1; }
.seek::-webkit-slider-runnable-track { height: 2px; background: linear-gradient(90deg, #e8d400 27%, #3c3c3c 27%); }
.seek::-webkit-slider-thumb { background: #f0dc00; }
.speaker { width: 16px; height: 14px; margin: 0 6px 0 12px; }
.volume { width: 88px; }
.volume::-webkit-slider-runnable-track { height: 2px; background: linear-gradient(90deg, #e8d400 45%, #000 45%); }
.volume::-webkit-slider-thumb { background: #eee; }
.controls { height: 15px; flex: none; display: flex; margin-top: 0; border-top: 1px solid #000; background: #1c1c1c; }
.controls i { width: 51px; border-right: 1px solid #000; }
.controls .tail { margin-left: auto; width: 52px; border-right: 0; border-left: 1px solid #000; }
```
FILE: script.js
```js
const letters = 'ABCDEFGHIJKLMNOPQRSTUVWXY'.split('');
const titles = ['物料编号', '物料名称', '物料类型', '物料规格', '图片', '数量', '价格', '物料详情'];
const records = [1, 2, 3, 4, 5, 6].map(n => [
  String(n).repeat(10), '物料名称' + n, '物料类型' + n, '物料规格' + n,
  n === 5 ? 'upload/1649042385910.jpg' : 'upload/wuliaoxinxi_tupian' + n + '.jpg',
  n, n, '物料详情' + n
]);
const kinds = ['num', '', '', '', 'path', 'num', 'num', ''];

let html = '<colgroup><col class="c-head">' + letters.map(l => `<col class="c-${l.toLowerCase()}">`).join('') + '</colgroup>';
html += '<thead><tr><th><i class="wedge"></i></th>' + letters.map((l, i) => `<th class="${i ? '' : 'lit'}">${l}</th>`).join('') + '</tr></thead><tbody>';
for (let r = 1; r <= 44; r++) {
  html += `<tr><th class="${r === 1 ? 'lit' : ''}">${r}</th>`;
  letters.forEach((l, c) => {
    const value = r === 1 ? titles[c] : (records[r - 2] || [])[c];
    const names = [r === 1 ? 'title' : (r < 8 && kinds[c]) || ''];
    if (r === 1 && c === 0) names.push('picked');
    if (r === 3 && c === 1) names.push('marked');
    html += `<td class="${names.join(' ').trim()}">${value === undefined ? '' : value}</td>`;
  });
  html += '</tr>';
}
document.getElementById('grid').innerHTML = html + '</tbody>';
```
